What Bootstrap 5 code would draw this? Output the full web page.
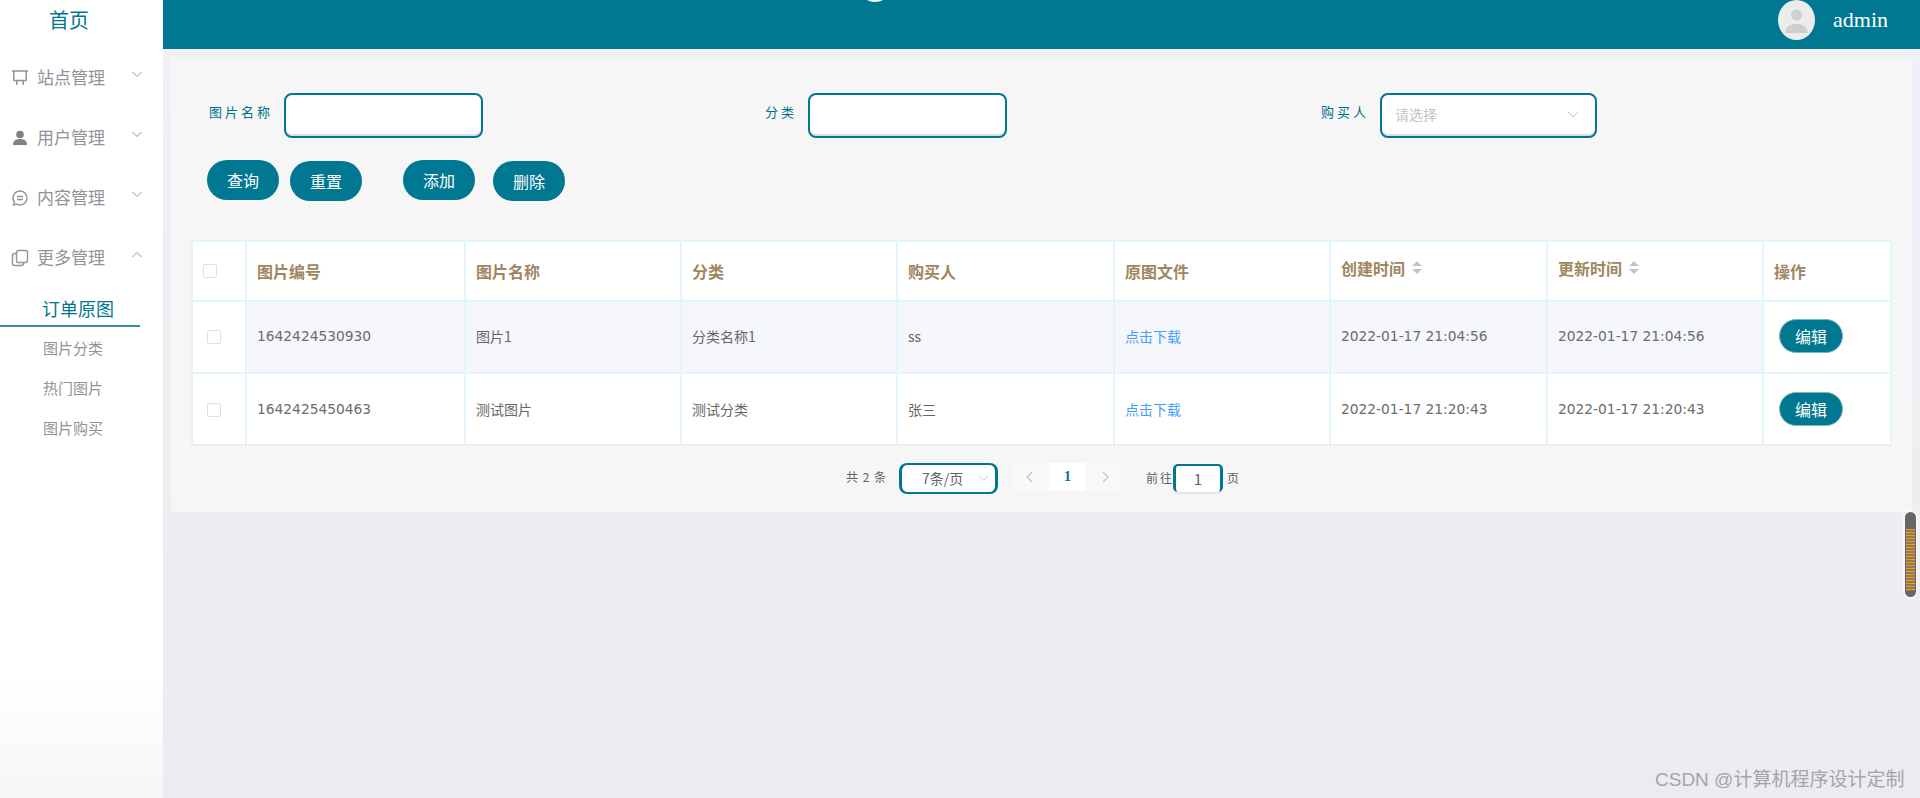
<!DOCTYPE html>
<html lang="zh">
<head>
<meta charset="utf-8">
<title>订单原图</title>
<link href="https://cdn.jsdelivr.net/npm/bootstrap@5.3.0/dist/css/bootstrap.min.css" rel="stylesheet">
<style>
html,body{height:798px;overflow:hidden}
body{font-family:"Noto Sans CJK SC","Liberation Sans",sans-serif;background:linear-gradient(#f1f0f6,#ebebf0);color:#606266}
.shell{height:798px}
.side{width:163px;flex:none;background:linear-gradient(#fff 85%,#f6f6f8);}
.home{height:48px;padding-top:6px;font-size:20px;line-height:28px;color:#00778f;text-align:center;padding-right:25px;padding-left:0}
.mitem{height:60px;padding-left:11px;color:#909399;font-size:17px;gap:8px}
.mitem span{margin-top:-2px}
.mitem svg.ic{width:18px;height:18px;flex:none}
.mitem .chev{width:10px;height:7px;margin-left:19px;margin-top:-8px;flex:none}
.sub{height:40px;padding-left:43px;font-size:15px;color:#909399;line-height:38px}
.sub.on{width:140px;height:39px;margin-bottom:2px;padding-left:42px;font-size:18px;color:#00778f;border-bottom:2px solid #3a8ea3;line-height:41px}
.main{flex:1;min-width:0}
.top{height:49px;background:#007891;position:relative;flex:none}
.dot{position:absolute;left:700px;top:-14px;width:24px;height:16px;border-radius:50%;background:#fff}
.avatar{position:absolute;left:1615px;top:0;width:37px;height:40px;border-radius:50%;background:#ececec;overflow:hidden}
.uname{position:absolute;left:1670px;top:4px;font:22px/32px "Liberation Serif",serif;color:#fff}
.panel{margin:8px 8px 0;height:455px;background:#f6f6f6;padding:36px 21px 0}
.frow{padding-left:17px;height:44px;align-items:flex-start}
.field{width:556px;gap:11px}
.lab{font-size:13px;letter-spacing:3px;color:#00708a;line-height:18px;margin-top:-7px;white-space:nowrap}
.tin{height:45px;width:199px;border:2px solid #00778f;border-radius:8px;background:#fff;box-shadow:inset 0 -2px 0 #ddd}
.tsel{width:217px;padding:0 16px 2px 13px;color:#c0c4cc;font-size:14px}
.brow{margin-top:23px;padding-left:15px;height:41px}
.pill{width:72px;height:40px;border-radius:20px;background:#007891;color:#fff;font-size:16px;border:0;padding:0;line-height:38px;text-align:center}
.low{margin-top:1px}
.gap1{margin-left:11px}.gap2{margin-left:41px}.gap3{margin-left:18px}
.grid{table-layout:fixed;width:1699px;margin:39px 0 0 -1px;border-collapse:collapse;background:#fff}
.grid th,.grid td{border:2px solid #e2f5fc;padding:0 10px;overflow:hidden;white-space:nowrap}
.grid th{height:60px;font-size:16px;font-weight:700;color:#a08660;padding-top:0;padding-bottom:1px}
.grid td{height:72px;font-size:14px;color:#666;padding-bottom:2px}
.grid tr:last-child td{border-bottom-color:#eceef3;padding-bottom:0}
.c0{width:54px}.c1{width:219px}.c2,.c3,.c5,.c7{width:216px}.c4,.c6{width:217px}.c8{width:128px}
.grid td.num{font-family:"DejaVu Sans",sans-serif;font-size:13.8px;color:#6c6c6c}
.grid tr.alt td{background:#f5f7fb}
.grid tr.alt td.plain{background:#fff}
.tick{display:block;width:14px;height:14px;border:1px solid #dcdfe6;border-radius:2px;background:#fff}
.hk{margin-left:0}.rk{margin-left:4px;margin-top:2px}
.dl{color:#409eff;text-decoration:none}
.sortin{margin-top:-6px;display:flex;align-items:center;gap:7px}
.car{width:10px;height:13px;flex:none}
.edit{width:64px;height:34px;border-radius:17px;background:#007891;color:#fff;font-size:16px;line-height:32px;text-align:center;margin:-1px 0 0 5px;padding:0;border:1px solid #7fb7b0}
.pager{margin-top:16px;height:32px;padding-left:654px;font-size:12px;color:#606266}
.cnt{letter-spacing:1.5px;word-spacing:-1px;width:53px;margin-top:-2px;white-space:nowrap}
.psel{width:99px;height:31px;border:2px solid #00778f;border-left-width:3px;border-right-width:3px;border-radius:8px;background:#fff;font-size:14px;padding:0 6px 0 20px;color:#606266}
.pg{width:36px;height:28px;background:#f9f9f9;margin-top:-3px}
.pg.cur{background:#fff;color:#00778f;font-weight:700;font-family:"Liberation Serif",serif;font-size:14px;width:35px}
.pv{margin-right:6px}.nx{margin-left:6px}
.goto{letter-spacing:2px;margin-left:25px;width:27px;white-space:nowrap}
.pin{width:50px;height:28px;border:solid #00778f;border-width:2px 3px 0;border-radius:5px;background:#fff;font-size:15px;text-align:center;line-height:26px;box-shadow:0 2px 0 #e6e6e6;margin-top:-1px}
.wm{position:absolute;left:1655px;top:767px;font:19px/26px "Liberation Sans","Noto Sans CJK SC",sans-serif;color:#a5a5a8;white-space:nowrap}
.grip{position:absolute;left:1905px;top:512px;width:11px;height:85px;border-radius:6px;background:#666;box-shadow:0 0 0 2px rgba(255,255,255,.55)}
.grip i{display:block;margin:17px 1px 0;height:62px;background:repeating-linear-gradient(#f59a13 0 1px,#8c7a5c 1px 3px)}
</style>
</head>
<body class="position-relative">
<div class="shell d-flex">
  <aside class="side">
    <div class="home">首页</div>
    <div class="mitem d-flex align-items-center"><svg class="ic" viewBox="0 0 18 18" fill="none" stroke="#909399" stroke-width="1.5"><path d="M1 2h16M2.800 2v9.500h12.400V2M5.800 11.500V16M12.200 11.500V16"/></svg><span>站点管理</span><svg class="chev" viewBox="0 0 10 7" fill="none" stroke="#909399"><path d="M.5 1L5 5.500 9.500 1"/></svg></div>
    <div class="mitem d-flex align-items-center"><svg class="ic" viewBox="0 0 18 18" fill="#808287"><circle cx="9" cy="5.500" r="3.800"/><path d="M2 16c0-4 2.500-6 7-6s7 2 7 6z"/></svg><span>用户管理</span><svg class="chev" viewBox="0 0 10 7" fill="none" stroke="#909399"><path d="M.5 1L5 5.500 9.500 1"/></svg></div>
    <div class="mitem d-flex align-items-center"><svg class="ic" viewBox="0 0 18 18" fill="none" stroke="#909399" stroke-width="1.400"><path d="M9 2a7 7 0 1 1-3.400 13.100L2.500 16l.8-3.100A7 7 0 0 1 9 2z"/><path d="M6 7.500h6M6 10.500h6"/></svg><span>内容管理</span><svg class="chev" viewBox="0 0 10 7" fill="none" stroke="#909399"><path d="M.5 1L5 5.500 9.500 1"/></svg></div>
    <div class="mitem d-flex align-items-center"><svg class="ic" viewBox="0 0 18 18" fill="none" stroke="#909399" stroke-width="1.400"><rect x="5.500" y="1.500" width="11" height="12" rx="2"/><path d="M5.500 4.500H3.500a2 2 0 0 0-2 2v8a2 2 0 0 0 2 2h7a2 2 0 0 0 2-2v-1"/></svg><span>更多管理</span><svg class="chev" viewBox="0 0 10 7" fill="none" stroke="#909399"><path d="M.5 6L5 1.500 9.500 6"/></svg></div>
    <div class="sub on">订单原图</div>
    <div class="sub">图片分类</div>
    <div class="sub">热门图片</div>
    <div class="sub">图片购买</div>
  </aside>
  <main class="main d-flex flex-column">
    <header class="top">
      <span class="dot"></span>
      <span class="avatar"><svg viewBox="0 0 37 40" width="37" height="40" fill="#cfcfcf"><circle cx="18.500" cy="15" r="5.500"/><path d="M7 33c1-7 6-8 8-9h7c2 1 7 2 8 9z"/></svg></span>
      <span class="uname">admin</span>
    </header>
    <section class="panel">
      <div class="frow d-flex">
        <div class="field d-flex align-items-center"><span class="lab">图片名称</span><div class="tin"></div></div>
        <div class="field d-flex align-items-center"><span class="lab">分类</span><div class="tin"></div></div>
        <div class="field d-flex align-items-center"><span class="lab">购买人</span><div class="tin tsel d-flex align-items-center justify-content-between"><span>请选择</span><svg width="12" height="8" viewBox="0 0 12 8" fill="none" stroke="#c0c4cc"><path d="M1 1l5 5 5-5"/></svg></div></div>
      </div>
      <div class="brow d-flex align-items-start">
        <button class="pill">查询</button>
        <button class="pill low gap1">重置</button>
        <button class="pill gap2">添加</button>
        <button class="pill low gap3">删除</button>
      </div>
      <table class="grid">
        <colgroup><col class="c0"><col class="c1"><col class="c2"><col class="c3"><col class="c4"><col class="c5"><col class="c6"><col class="c7"><col class="c8"></colgroup>
        <thead><tr>
          <th><span class="tick hk"></span></th><th>图片编号</th><th>图片名称</th><th>分类</th><th>购买人</th><th>原图文件</th>
          <th><div class="sortin">创建时间<svg class="car" viewBox="0 0 10 13" fill="#c0c4cc"><path d="M5 0l5 5H0zM0 8h10l-5 5z"/></svg></div></th>
          <th><div class="sortin">更新时间<svg class="car" viewBox="0 0 10 13" fill="#c0c4cc"><path d="M5 0l5 5H0zM0 8h10l-5 5z"/></svg></div></th>
          <th>操作</th>
        </tr></thead>
        <tbody>
          <tr class="alt"><td class="plain"><span class="tick rk"></span></td><td class="num">1642424530930</td><td>图片1</td><td>分类名称1</td><td>ss</td><td><a class="dl" href="#">点击下载</a></td><td class="num">2022-01-17 21:04:56</td><td class="num">2022-01-17 21:04:56</td><td class="plain"><div class="edit">编辑</div></td></tr>
          <tr><td><span class="tick rk"></span></td><td class="num">1642425450463</td><td>测试图片</td><td>测试分类</td><td>张三</td><td><a class="dl" href="#">点击下载</a></td><td class="num">2022-01-17 21:20:43</td><td class="num">2022-01-17 21:20:43</td><td><div class="edit">编辑</div></td></tr>
        </tbody>
      </table>
      <div class="pager d-flex align-items-center">
        <span class="cnt">共 2 条</span>
        <div class="psel d-flex align-items-center justify-content-between"><span>7条/页</span><svg width="11" height="7" viewBox="0 0 12 8" fill="none" stroke="#c0c4cc"><path d="M1 1l5 5 5-5"/></svg></div>
        <div class="pg ms-3 d-flex align-items-center justify-content-center"><svg class="pv" width="8" height="12" viewBox="0 0 8 12" fill="none" stroke="#c0c4cc" stroke-width="1.300"><path d="M7 1L2 6l5 5"/></svg></div>
        <div class="pg cur d-flex align-items-center justify-content-center">1</div>
        <div class="pg d-flex align-items-center justify-content-center"><svg class="nx" width="8" height="12" viewBox="0 0 8 12" fill="none" stroke="#c0c4cc" stroke-width="1.300"><path d="M1 1l5 5-5 5"/></svg></div>
        <span class="goto">前往</span>
        <div class="pin">1</div>
        <span class="ms-1">页</span>
      </div>
    </section>
  </main>
</div>
<div class="grip"><i></i></div>
<div class="wm">CSDN @计算机程序设计定制</div>
<script src="https://cdn.jsdelivr.net/npm/bootstrap@5.3.0/dist/js/bootstrap.bundle.min.js"></script>
</body>
</html>
